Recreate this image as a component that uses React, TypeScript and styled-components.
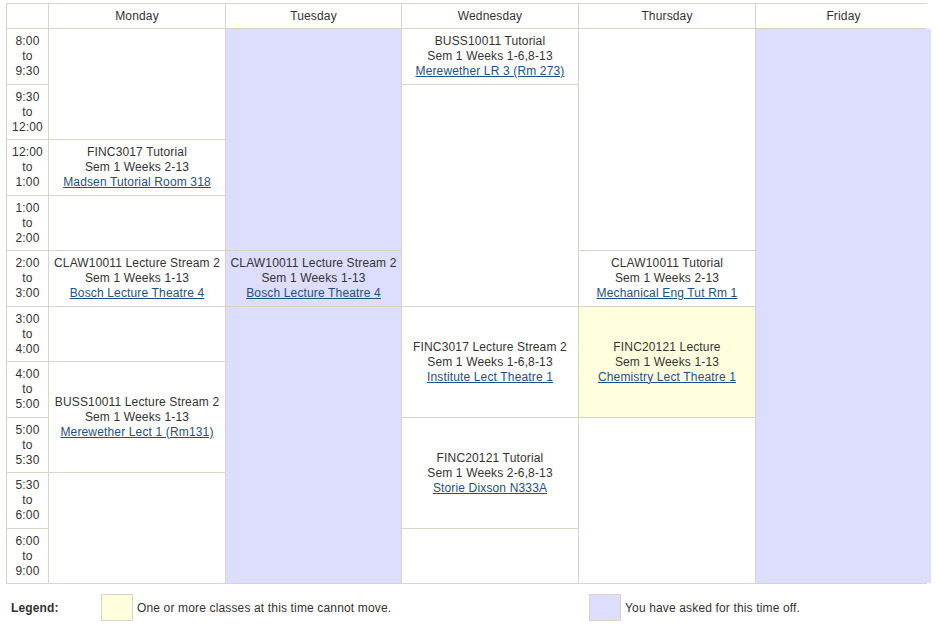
import React from "react";
import styled, { createGlobalStyle } from "styled-components";

const Global = createGlobalStyle`
  html, body { margin: 0; padding: 0; background: #ffffff; }
  body { font-family: "Liberation Sans", Arial, Helvetica, sans-serif; font-size: 12px; color: #333333; letter-spacing: 0.15px; }
`;

const BORDER = "#d8d4c8";
const OFF = "#ddddff";
const FIXED = "#ffffdd";

const Page = styled.div`
  padding: 3px 0 0 6px;
  width: 926px;
`;

const Grid = styled.div`
  display: grid;
  grid-template-columns: 41px 176px 175px 176px 176px 175px;
  grid-template-rows: 24px 55px 54px 55px 54px 55px 54px 55px 54px 55px 54px;
  gap: 1px;
  background: ${BORDER};
  border: 1px solid ${BORDER};
  width: 919px;
`;

const Head = styled.div`
  background: #ffffff;
  display: flex;
  align-items: center;
  justify-content: center;
  font-size: 12px;
  color: #333333;
`;

const Time = styled.div`
  background: #ffffff;
  display: flex;
  flex-direction: column;
  align-items: center;
  justify-content: center;
  line-height: 15px;
  font-size: 12px;
  color: #333333;
  text-align: center;
`;

type Tone = "plain" | "off" | "fixed";

const Cell = styled.div<{ $tone: Tone; $col: number; $row: number; $span: number }>`
  grid-column: ${(p) => p.$col};
  grid-row: ${(p) => p.$row} / span ${(p) => p.$span};
  background: ${(p) => (p.$tone === "off" ? OFF : p.$tone === "fixed" ? FIXED : "#ffffff")};
  display: flex;
  flex-direction: column;
  align-items: center;
  justify-content: center;
  text-align: center;
  line-height: 15px;
  font-size: 12px;
  color: #333333;
`;

const Room = styled.a`
  color: #1f5080;
  text-decoration: underline;
  cursor: pointer;
`;

const Legend = styled.div`
  display: flex;
  align-items: center;
  padding: 10px 0 0 5px;
  font-size: 12px;
  color: #333333;
`;

const LegendLabel = styled.div`
  width: 90px;
  font-weight: bold;
`;

const Swatch = styled.div<{ $tone: Tone }>`
  width: 30px;
  height: 25px;
  border: 1px solid ${BORDER};
  background: ${(p) => (p.$tone === "off" ? OFF : FIXED)};
  margin-right: 4px;
  flex: none;
`;

const LegendText = styled.div<{ $w?: number }>`
  width: ${(p) => (p.$w ? `${p.$w}px` : "auto")};
`;

const days = ["Monday", "Tuesday", "Wednesday", "Thursday", "Friday"];
const times = [
  ["8:00", "9:30"],
  ["9:30", "12:00"],
  ["12:00", "1:00"],
  ["1:00", "2:00"],
  ["2:00", "3:00"],
  ["3:00", "4:00"],
  ["4:00", "5:00"],
  ["5:00", "5:30"],
  ["5:30", "6:00"],
  ["6:00", "9:00"],
];

type Entry = {
  col: number;
  start: number;
  span: number;
  tone: Tone;
  lines?: [string, string, string];
};

const entries: Entry[] = [
  { col: 2, start: 0, span: 2, tone: "plain" },
  { col: 2, start: 2, span: 1, tone: "plain", lines: ["FINC3017 Tutorial", "Sem 1 Weeks 2-13", "Madsen Tutorial Room 318"] },
  { col: 2, start: 3, span: 1, tone: "plain" },
  { col: 2, start: 4, span: 1, tone: "plain", lines: ["CLAW10011 Lecture Stream 2", "Sem 1 Weeks 1-13", "Bosch Lecture Theatre 4"] },
  { col: 2, start: 5, span: 1, tone: "plain" },
  { col: 2, start: 6, span: 2, tone: "plain", lines: ["BUSS10011 Lecture Stream 2", "Sem 1 Weeks 1-13", "Merewether Lect 1 (Rm131)"] },
  { col: 2, start: 8, span: 2, tone: "plain" },
  { col: 3, start: 0, span: 4, tone: "off" },
  { col: 3, start: 4, span: 1, tone: "off", lines: ["CLAW10011 Lecture Stream 2", "Sem 1 Weeks 1-13", "Bosch Lecture Theatre 4"] },
  { col: 3, start: 5, span: 5, tone: "off" },
  { col: 4, start: 0, span: 1, tone: "plain", lines: ["BUSS10011 Tutorial", "Sem 1 Weeks 1-6,8-13", "Merewether LR 3 (Rm 273)"] },
  { col: 4, start: 1, span: 4, tone: "plain" },
  { col: 4, start: 5, span: 2, tone: "plain", lines: ["FINC3017 Lecture Stream 2", "Sem 1 Weeks 1-6,8-13", "Institute Lect Theatre 1"] },
  { col: 4, start: 7, span: 2, tone: "plain", lines: ["FINC20121 Tutorial", "Sem 1 Weeks 2-6,8-13", "Storie Dixson N333A"] },
  { col: 4, start: 9, span: 1, tone: "plain" },
  { col: 5, start: 0, span: 4, tone: "plain" },
  { col: 5, start: 4, span: 1, tone: "plain", lines: ["CLAW10011 Tutorial", "Sem 1 Weeks 2-13", "Mechanical Eng Tut Rm 1"] },
  { col: 5, start: 5, span: 2, tone: "fixed", lines: ["FINC20121 Lecture", "Sem 1 Weeks 1-13", "Chemistry Lect Theatre 1"] },
  { col: 5, start: 7, span: 3, tone: "plain" },
  { col: 6, start: 0, span: 10, tone: "off" },
];

export default function App() {
  return (
    <>
      <Global />
      <Page>
        <Grid>
          <Head style={{ gridColumn: 1, gridRow: 1 }} />
          {days.map((d) => (
            <Head key={d}>{d}</Head>
          ))}
          {times.map(([a, b], i) => (
            <Time key={a} style={{ gridColumn: 1, gridRow: i + 2 }}>
              <span>{a}</span>
              <span>to</span>
              <span>{b}</span>
            </Time>
          ))}
          {entries.map((e, i) => (
            <Cell key={i} $tone={e.tone} $col={e.col} $row={e.start + 2} $span={e.span}>
              {e.lines && (
                <>
                  <span>{e.lines[0]}</span>
                  <span>{e.lines[1]}</span>
                  <Room>{e.lines[2]}</Room>
                </>
              )}
            </Cell>
          ))}
        </Grid>
        <Legend>
          <LegendLabel>Legend:</LegendLabel>
          <Swatch $tone="fixed" />
          <LegendText $w={452}>One or more classes at this time cannot move.</LegendText>
          <Swatch $tone="off" />
          <LegendText>You have asked for this time off.</LegendText>
        </Legend>
      </Page>
    </>
  );
}
